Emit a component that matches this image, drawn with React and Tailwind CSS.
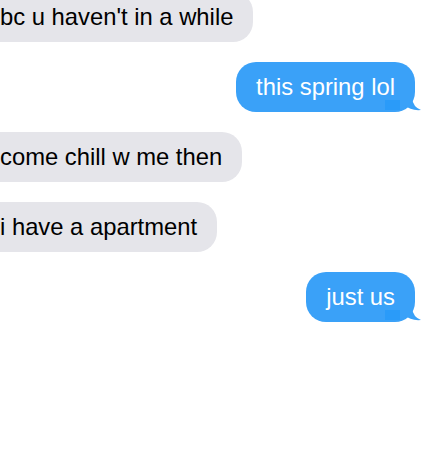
const messages = [
  { from: 'them', text: "bc u haven't in a while" },
  { from: 'me', text: 'this spring lol' },
  { from: 'them', text: 'come chill w me then' },
  { from: 'them', text: 'i have a apartment' },
  { from: 'me', text: 'just us' },
];

// little curled tail under the sender's bubble
function Tail() {
  return (
    <svg
      className="absolute right-[-6px] bottom-0"
      width="36"
      height="14"
      viewBox="0 0 36 14"
    >
      <rect x="0" y="2" width="16" height="10" fill="#2a9bf9" />
      <path
        d="M20 0 L27 0 Q28 9 36 12 Q26 13 19 7 Q17 12 15 12 L15 0 Z"
        fill="#3aa1f8"
      />
    </svg>
  );
}

function Bubble({ from, text }) {
  if (from === 'me') {
    return (
      <div className="flex justify-end pr-[6px]">
        <div className="relative bg-[#3aa1f8] text-white rounded-[20px] px-5 py-[10px] text-[23.8px] leading-[30px]">
          {text}
          <Tail />
        </div>
      </div>
    );
  }
  return (
    <div className="flex justify-start -ml-5">
      <div className="bg-[#e5e5ea] text-black rounded-[20px] px-5 py-[10px] text-[23.8px] leading-[30px]">
        {text}
      </div>
    </div>
  );
}

export default function App() {
  return (
    <div className="w-[421px] h-[471px] overflow-hidden bg-white font-['Liberation_Sans',Arial,sans-serif]">
      <div className="flex flex-col gap-5 -mt-2">
        {messages.map((m, i) => (
          <Bubble key={i} from={m.from} text={m.text} />
        ))}
      </div>
    </div>
  );
}
